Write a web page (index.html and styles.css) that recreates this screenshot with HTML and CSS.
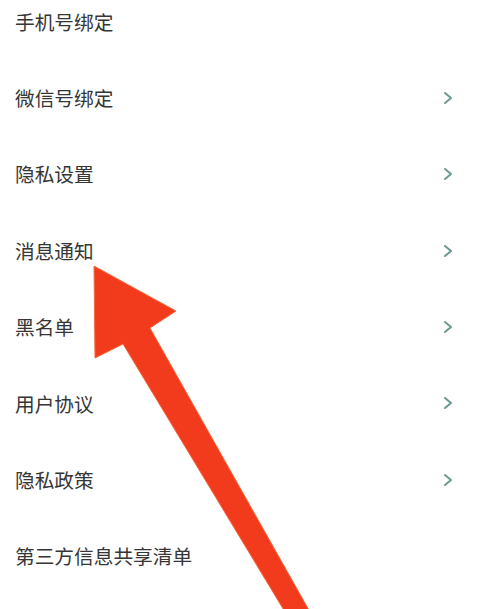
FILE: index.html
```html
<!DOCTYPE html>
<html lang="zh-CN">
<head>
<meta charset="utf-8">
<title>设置</title>
<link rel="stylesheet" href="styles.css">
</head>
<body>
<div class="page">
  <ul class="menu">
    <li class="item"><span class="label">手机号绑定</span></li>
    <li class="item"><span class="label">微信号绑定</span><svg class="chev" viewBox="0 0 10 14"><polyline points="2,2 8,7 2,12"/></svg></li>
    <li class="item"><span class="label">隐私设置</span><svg class="chev" viewBox="0 0 10 14"><polyline points="2,2 8,7 2,12"/></svg></li>
    <li class="item"><span class="label">消息通知</span><svg class="chev" viewBox="0 0 10 14"><polyline points="2,2 8,7 2,12"/></svg></li>
    <li class="item"><span class="label">黑名单</span><svg class="chev" viewBox="0 0 10 14"><polyline points="2,2 8,7 2,12"/></svg></li>
    <li class="item"><span class="label">用户协议</span><svg class="chev" viewBox="0 0 10 14"><polyline points="2,2 8,7 2,12"/></svg></li>
    <li class="item"><span class="label">隐私政策</span><svg class="chev" viewBox="0 0 10 14"><polyline points="2,2 8,7 2,12"/></svg></li>
    <li class="item"><span class="label">第三方信息共享清单</span></li>
  </ul>
  <svg class="arrow" viewBox="0 0 485 609" width="485" height="609">
    <polygon points="94,266 176,311 150,328 310,612 285,612 123,344 95,358"/>
  </svg>
</div>
</body>
</html>
```

FILE: styles.css
```css
html, body {
  margin: 0;
  padding: 0;
  background: #ffffff;
}
.page {
  position: relative;
  width: 485px;
  height: 609px;
  overflow: hidden;
  font-family: "Noto Sans CJK SC", "Noto Sans", sans-serif;
}
.menu {
  list-style: none;
  margin: -16.7px 0 0 0;
  padding: 0;
}
.item {
  display: flex;
  align-items: center;
  justify-content: space-between;
  height: 76.4px;
  padding: 0 32px 0 15px;
}
.label {
  font-size: 19.7px;
  line-height: 1;
  color: #363636;
}
.chev {
  width: 10px;
  height: 14px;
  fill: none;
  stroke: #6a9890;
  stroke-width: 2;
  stroke-linecap: round;
  stroke-linejoin: round;
}
.arrow {
  position: absolute;
  left: 0;
  top: 0;
}
.arrow polygon {
  fill: #f23a1c;
  stroke: #f66a3e;
  stroke-width: 1;
  stroke-linejoin: miter;
}
```
